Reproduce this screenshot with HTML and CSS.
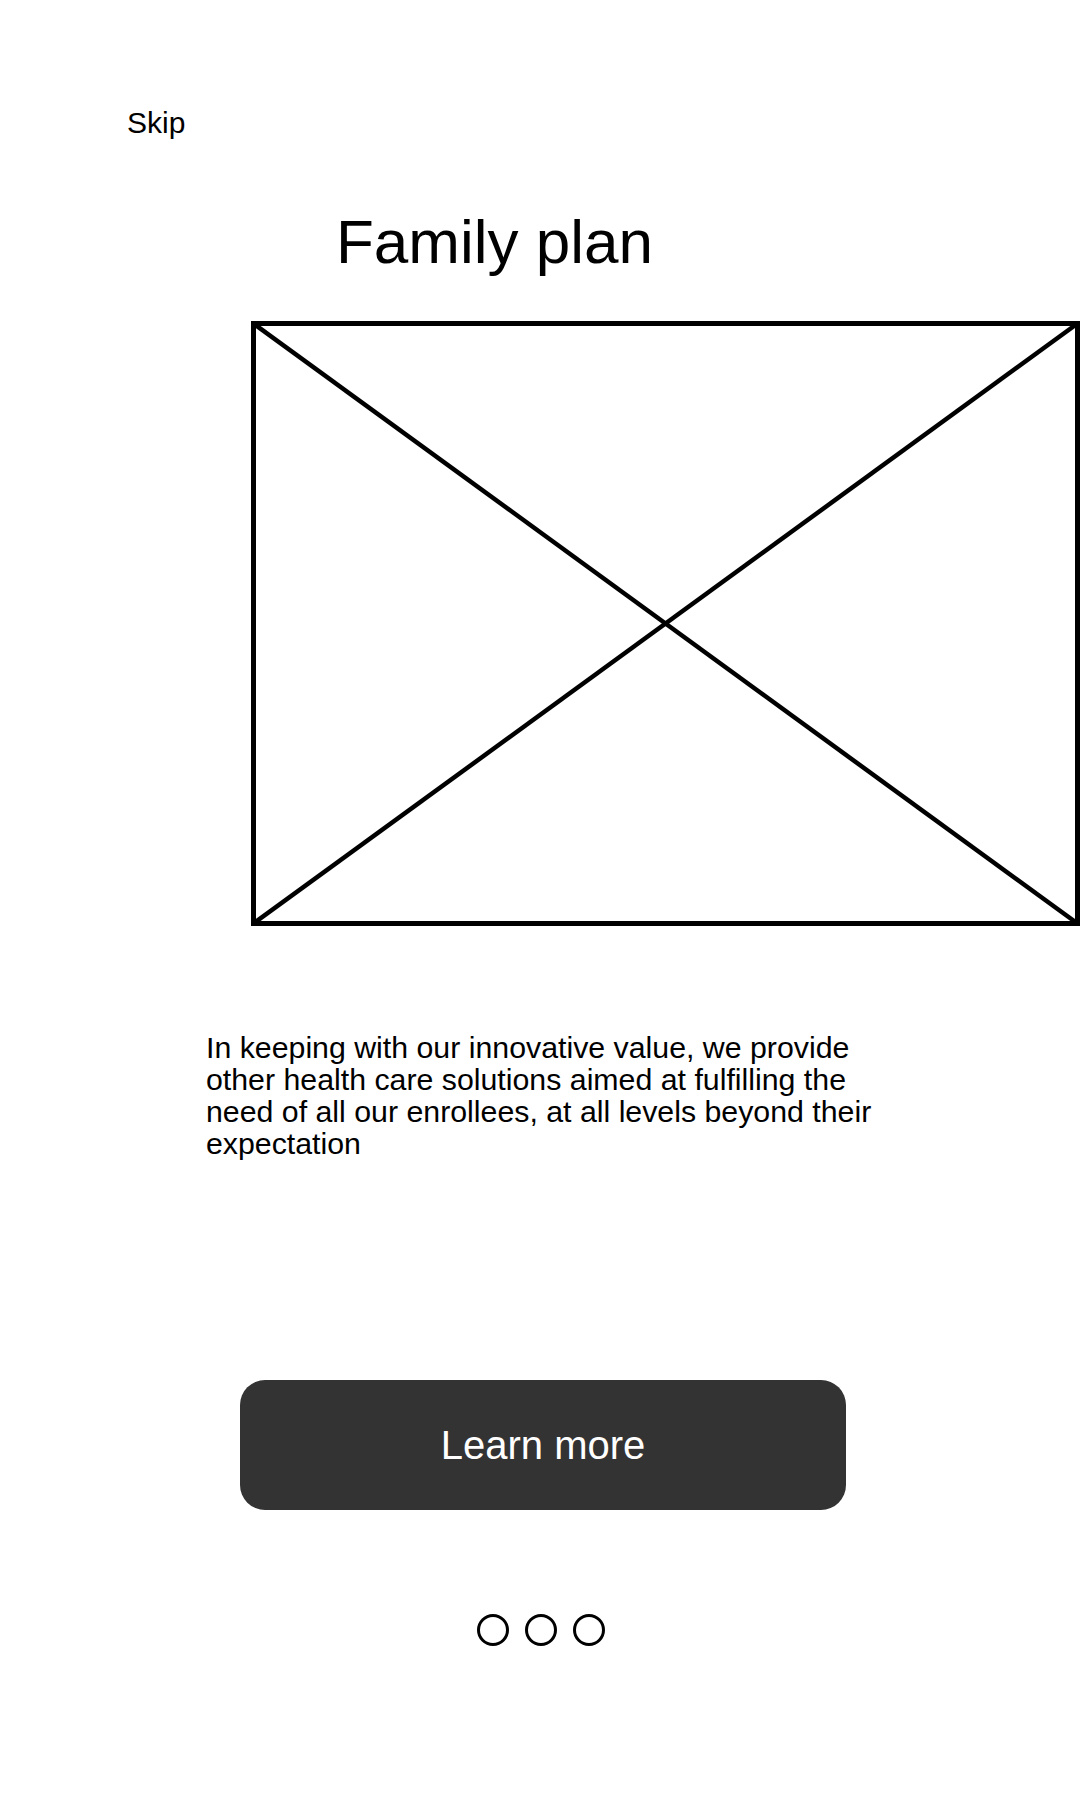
FILE: index.html
```html
<!DOCTYPE html>
<html lang="en">
<head>
    <meta charset="UTF-8">
    <meta name="viewport" content="width=device-width, initial-scale=1.0">
    <title>Family plan</title>
    <link rel="stylesheet" href="styles.css">
</head>
<body>
    <div class="screen">
        <!-- Top bar -->
        <a class="skip" href="#">Skip</a>

        <h1 class="title">Family plan</h1>

        <!-- Image placeholder -->
        <div class="placeholder">
            <svg width="829" height="605" viewBox="0 0 829 605">
                <rect x="2.5" y="2.5" width="824" height="600" fill="none" stroke="#000" stroke-width="5"/>
                <line x1="2.5" y1="2.5" x2="826.5" y2="602.5" stroke="#000" stroke-width="4.5"/>
                <line x1="826.5" y1="2.5" x2="2.5" y2="602.5" stroke="#000" stroke-width="4.5"/>
            </svg>
        </div>

        <p class="desc">In keeping with our innovative value, we provide other health care solutions aimed at fulfilling the need of all our enrollees, at all levels beyond their expectation</p>

        <button class="learn-more">Learn more</button>

        <!-- Pager -->
        <div class="dots">
            <span class="dot"></span>
            <span class="dot"></span>
            <span class="dot"></span>
        </div>
    </div>
</body>
</html>
```

FILE: styles.css
```css
body {
    margin: 0;
    padding: 0;
    background: #fff;
    font-family: "Liberation Sans", Arial, sans-serif;
    color: #000;
}
.screen {
    width: 1080px;
    height: 1800px;
    display: flex;
    flex-direction: column;
    align-items: flex-start;
    overflow: hidden;
}
.skip {
    margin: 109px 0 0 127px;
    font-size: 30px;
    line-height: 28px;
    color: #000;
    text-decoration: none;
}
.title {
    margin: 74px 0 0 336px;
    font-size: 62px;
    line-height: 62px;
    font-weight: normal;
}
.placeholder {
    margin: 48px 0 0 251px;
    width: 829px;
    height: 605px;
}
.placeholder svg {
    display: block;
}
.desc {
    margin: 106px 0 0 206px;
    width: 700px;
    font-size: 30.3px;
    line-height: 32px;
}
.learn-more {
    margin: 220px 0 0 240px;
    width: 606px;
    height: 130px;
    border: none;
    border-radius: 25px;
    background-color: #333;
    color: #fff;
    font-family: inherit;
    font-size: 40px;
    padding: 0;
    cursor: pointer;
}

/* Pager dots */
.dots {
    align-self: stretch;
    margin-top: 104px;
    display: flex;
    justify-content: center;
    gap: 16px;
    padding-left: 2px;
}
.dot {
    width: 26px;
    height: 26px;
    border: 3px solid #000;
    border-radius: 50%;
}
```
